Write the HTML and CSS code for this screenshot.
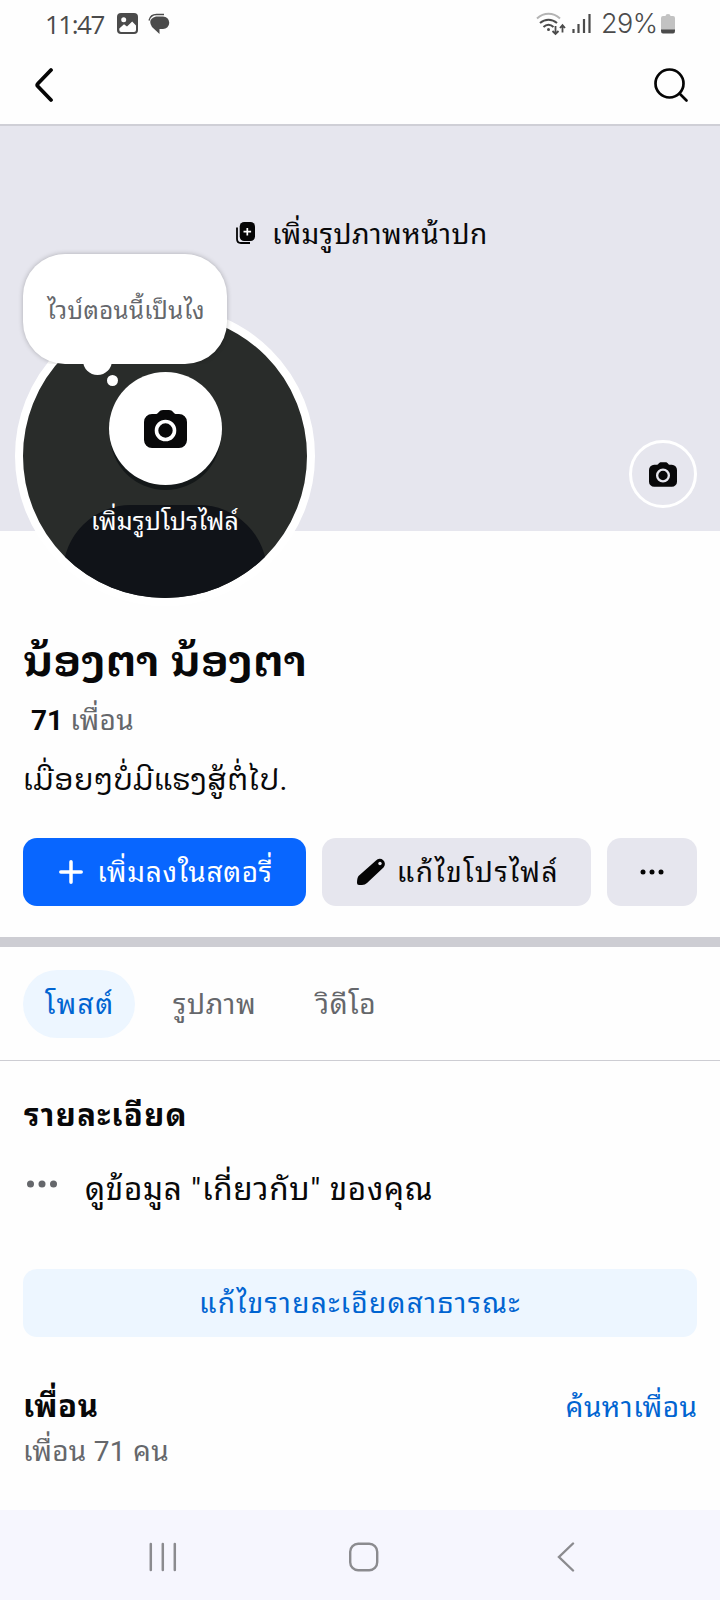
FILE: index.html
```html
<!DOCTYPE html>
<html lang="th">
<head>
<meta charset="utf-8">
<title>ນ້ອງຕາ ນ້ອງຕາ</title>
<link rel="stylesheet" href="styles.css">
</head>
<body>
<svg width="0" height="0" class="defs">
  <symbol id="camera" viewBox="0 0 43 38">
    <path fill="currentColor" d="M8 4h4.500C15 3 15 0 19 0h6c4 0 4 3 6.500 4H35a8 8 0 0 1 8 8v18a8 8 0 0 1-8 8H8a8 8 0 0 1-8-8V12a8 8 0 0 1 8-8z"/>
    <circle cx="21.500" cy="20.500" r="9" fill="none" stroke="var(--ring)" stroke-width="3.600"/>
  </symbol>
</svg>
<div class="screen">
  <div class="status">
    <span class="time">11:47</span>
    <svg class="st-img" width="21" height="21" viewBox="0 0 21 21"><rect width="21" height="21" rx="4" fill="#4b4b4b"/><circle cx="6.700" cy="6.700" r="2.500" fill="#fff"/><path d="M2.300 15.500L7 11.200l3 2.300 5.200-5 3.800 4V17q0 2-2 2H4.300q-2 0-2-2z" fill="#fff"/></svg>
    <svg class="st-chat" width="22" height="21" viewBox="0 0 22 21"><path d="M8 3.500h7a6 6 0 0 1 0 12.500h-3.500V21L4 14Q-1 6 8 3.500z" fill="#4b4b4b"/><path d="M1 7.500Q2.500 1.500 8.500 1.500h7.500" fill="none" stroke="#4b4b4b" stroke-width="1.300"/></svg>
    <svg class="st-wifi" width="30" height="24" viewBox="0 0 30 24" fill="none"><path d="M1 6.500C8 .3 17 .3 24 6.500" stroke="#b4b4b4" stroke-width="2"/><path d="M4 11c5-4.500 12-4.500 17 0M7.500 15c3-3 7-3 10 0" stroke="#4b4b4b" stroke-width="2"/><circle cx="12.500" cy="17.500" r="1.500" fill="#4b4b4b"/><path d="M19.500 14V22M16.500 19l3 3 3-3M26.500 20.500V13.500M24 16l2.500-2.800 2.500 2.800" stroke="#4b4b4b" stroke-width="1.800"/></svg>
    <svg class="st-sig" width="19" height="20" viewBox="0 0 19 20" stroke="#4b4b4b" stroke-width="2.200"><path d="M1.500 15v4M6.500 10v9M12 5v14M17.500 0v19"/></svg>
    <span class="pct">29%</span>
    <svg class="st-bat" width="14" height="20" viewBox="0 0 14 20"><path d="M2 2h2.500q0-2 2.500-2t2.500 2H12q2 0 2 2v12H0V4q0-2 2-2z" fill="#c2c2c2"/><path d="M0 15.500h14V17q0 2.500-2 2.500H2Q0 19.500 0 17z" fill="#4b4b4b"/></svg>
  </div>
  <header class="topbar">
    <svg width="20" height="36" viewBox="0 0 20 36"><path d="M17 3L4 16.500q-1.500 1.500 0 3L17 33" fill="none" stroke="#050505" stroke-width="3.800" stroke-linecap="round" stroke-linejoin="round"/></svg>
    <svg width="36" height="36" viewBox="0 0 36 36" fill="none" stroke="#050505" stroke-width="2.700"><circle cx="16.500" cy="16.500" r="14"/><path d="M26.500 26.500l7 7" stroke-linecap="round"/></svg>
  </header>
  <section class="cover">
    <div class="add-cover">
      <svg width="19" height="22" viewBox="0 0 19 22"><rect x="3.700" y="0" width="15.300" height="19" rx="4.500" fill="#050505"/><path d="M11.300 6v7.500M7.500 9.700h7.600" stroke="#fff" stroke-width="1.700"/><path d="M1 5.500V17q0 4 4 4h9" fill="none" stroke="#050505" stroke-width="1.800"/></svg>
      <span class="t-cover">เพิ่มรูปภาพหน้าปก</span>
    </div>
    <div class="cover-cam"><svg width="28" height="25"><use href="#camera"/></svg></div>
    <div class="avatar">
      <div class="cam-big"><svg width="43" height="38"><use href="#camera"/></svg></div>
      <span class="t-avatar">เพิ่มรูปโปรไฟล์</span>
    </div>
    <div class="bubble"><span class="t-bubble">ไวบ์ตอนนี้เป็นไง</span></div>
    <i class="dot dot-a"></i><i class="dot dot-b"></i>
  </section>
  <section class="profile">
    <h1 class="name">ນ້ອງຕາ ນ້ອງຕາ</h1>
    <p class="friends-count"><b>71</b><span class="t-fc">เพื่อน</span></p>
    <p class="bio">ເມື່ອຍໆບໍ່ມີແຮງສູ້ຕໍ່ໄປ.</p>
    <div class="actions">
      <div class="btn primary"><svg width="24" height="24" viewBox="0 0 24 24"><path d="M12 1.800v20.400M1.800 12h20.400" stroke="#fff" stroke-width="3.500" stroke-linecap="round"/></svg><span class="t-story">เพิ่มลงในสตอรี่</span></div>
      <div class="btn edit"><svg width="28" height="28" viewBox="0 0 28 28"><path d="M1.500 18L19 2.500a5 5 0 0 1 7.500 7L10 25q-2 2-5 2H2Q0 27 0 25q0-5 1.500-7z" fill="#050505"/><circle cx="23" cy="5.500" r="1.700" fill="#e6e6ee"/></svg><span class="t-edit">แก้ไขโปรไฟล์</span></div>
      <div class="btn more"><svg width="24" height="6" viewBox="0 0 24 6" fill="#050505"><circle cx="3" cy="3" r="2.500"/><circle cx="12" cy="3" r="2.500"/><circle cx="21" cy="3" r="2.500"/></svg></div>
    </div>
  </section>
  <nav class="tabs">
    <span class="tab active"><span class="t-tab1">โพสต์</span></span>
    <span class="tab"><span class="t-tab2">รูปภาพ</span></span>
    <span class="tab"><span class="t-tab3">วิดีโอ</span></span>
  </nav>
  <section class="details">
    <h2><span class="t-h1">รายละเอียด</span></h2>
    <div class="about"><svg width="32" height="8" viewBox="0 0 32 8" fill="#65676b"><circle cx="4.500" cy="4" r="3.500"/><circle cx="16" cy="4" r="3.500"/><circle cx="27.500" cy="4" r="3.500"/></svg><span class="t-about">ดูข้อมูล "เกี่ยวกับ" ของคุณ</span></div>
    <div class="public"><span class="t-public">แก้ไขรายละเอียดสาธารณะ</span></div>
    <div class="friends-head"><h2><span class="t-h2">เพื่อน</span></h2><span class="t-find">ค้นหาเพื่อน</span></div>
    <p class="sub"><span class="t-sub">เพื่อน 71 คน</span></p>
  </section>
  <footer class="sysnav">
    <svg width="28" height="30" viewBox="0 0 28 30"><path d="M1.800 2v26M13.800 2v26M25.800 2v26" stroke="#8b8b8f" stroke-width="2.500" stroke-linecap="round"/></svg>
    <svg class="home" width="30" height="30" viewBox="0 0 30 30"><rect x="1.200" y="1.700" width="27" height="26.600" rx="8" fill="none" stroke="#8b8b8f" stroke-width="2.400"/></svg>
    <svg width="18" height="30" viewBox="0 0 18 30"><path d="M16 1.500L2 15l14 13.500" fill="none" stroke="#8b8b8f" stroke-width="2.400" stroke-linecap="round"/></svg>
  </footer>
</div>
</body>
</html>
```
FILE: styles.css
```css
* { box-sizing: border-box; margin: 0; padding: 0; }
body { background: #fff; color: #080809; font-family: Roboto, "Noto Sans Thai Looped", "Noto Looped Thai", "Noto Sans Lao Looped", "Noto Looped Lao", "Noto Sans", sans-serif; font-size: 28px; }
svg { display: block; flex: none; }
.defs { position: absolute; }
.screen { width: 720px; height: 1600px; display: flex; flex-direction: column; overflow: hidden; background: #fefefe; }
.screen span, h1, p { white-space: nowrap; }
.status { height: 46px; display: flex; align-items: center; padding: 1px 45px 0 45px; color: #4b4b4b; font-size: 27px; }
.time { font-family: "Open Sans", sans-serif; font-size: 26px; width: 72px; letter-spacing: -1.5px; }
.st-chat { margin-left: 10px; }
.st-wifi { margin-left: auto; }
.st-sig { margin-left: 6px; }
.pct { margin-left: 10px; width: 57px; font-family: Inter, sans-serif; font-size: 27px; font-weight: 300; letter-spacing: -0.5px; }
.st-bat { margin-left: 3px; }
.topbar { height: 80px; display: flex; align-items: center; justify-content: space-between; padding: 0 31px 1px 34px; border-bottom: 2px solid #cfcfd6; }
.cover { height: 405px; background: #e6e6ee; position: relative; line-height: 40px; }
.add-cover { display: flex; align-items: center; gap: 17px; height: 60px; position: absolute; left: 236px; top: 77px; }
.t-cover { letter-spacing: 0.5px; padding-top: 3px; }
.cover-cam { position: absolute; right: 23px; top: 314px; width: 68px; height: 68px; border: 3px solid #fff; border-radius: 50%; display: grid; place-items: center; --ring: #e6e6ee; }
.avatar { position: absolute; left: 15px; top: 180px; width: 300px; height: 300px; border-radius: 50%; border: 8px solid #fff; background: #292c2a; overflow: hidden; display: flex; flex-direction: column; align-items: center; padding-top: 58px; }
.avatar::before { content: ""; position: absolute; left: 40px; top: 191px; width: 204px; height: 160px; border-radius: 68px 68px 0 0; background: #101318; }
.cam-big { width: 113px; height: 113px; border-radius: 50%; background: #fff; display: grid; place-items: center; --ring: #fff; box-shadow: 0 6px 0 -1px #141819; position: relative; }
.t-avatar { position: relative; color: #fff; margin-top: 17px; font-size: 25px; letter-spacing: 0.15px; }
.bubble { position: absolute; left: 23px; top: 128px; width: 204px; height: 110px; padding: 4px 0 0 2px; border-radius: 42px; background: #fff; box-shadow: 0 0 5px rgba(0,0,0,.25); clip-path: inset(-6px -6px 0 -6px); display: grid; place-items: center; color: #65676b; font-size: 24px; letter-spacing: 0.4px; }
.dot { position: absolute; background: #fff; border-radius: 50%; }
.dot-a { left: 83px; top: 220px; width: 29px; height: 29px; }
.dot-b { left: 107px; top: 249px; width: 11px; height: 11px; }
.profile { height: 416px; padding: 95px 23px 0; border-bottom: 10px solid #cdcdd3; }
.name { font-size: 42px; line-height: 72px; height: 70px; font-weight: 700; letter-spacing: 0.2px; }
.friends-count { display: flex; gap: 7px; padding-left: 8px; height: 50px; line-height: 50px; color: #65676b; }
.t-fc { letter-spacing: 0.4px; }
.friends-count b { color: #080809; font-size: 28px; }
.bio { font-size: 30px; height: 92px; line-height: 67px; }
.actions { display: grid; grid-template-columns: 283px 269px 90px; gap: 16px; height: 68px; line-height: 40px; }
.btn { border-radius: 14px; background: #e6e6ee; display: flex; align-items: center; justify-content: center; gap: 15px; }
.btn span { padding-top: 2px; }
.primary { background: #0866ff; color: #fff; letter-spacing: 0.7px; gap: 14px; padding-left: 3px; }
.edit { letter-spacing: 1.6px; gap: 12px; padding-left: 3px; }
.tabs { height: 114px; display: flex; align-items: center; padding: 0 23px; border-bottom: 1px solid #cdcdd3; color: #65676b; line-height: 40px; }
.tab { height: 68px; padding: 2px 22px 0; border-radius: 34px; display: flex; align-items: center; margin-right: 15px; letter-spacing: 0.7px; }
.active { width: 112px; margin-right: 16px; background: #edf6ff; color: #0064d1; letter-spacing: 1.5px; }
.details { height: 449px; padding: 0 23px; }
h2 { font-size: 31px; line-height: 50px; letter-spacing: 0.6px; }
.details > h2 { padding: 30px 0 0 1px; height: 78px; letter-spacing: 1.3px; }
.about { display: flex; gap: 27px; height: 120px; line-height: 101px; padding-left: 3px; font-size: 31.500px; letter-spacing: 0.7px; }
.about svg { margin-top: 41px; }
.public { height: 68px; margin-top: 10px; border-radius: 14px; background: #edf6ff; color: #0064d1; display: flex; align-items: center; justify-content: center; line-height: 40px; padding-top: 2px; letter-spacing: 1.350px; }
.friends-head { display: flex; justify-content: space-between; align-items: center; margin-top: 45px; height: 50px; line-height: 50px; color: #0064d1; }
.t-find { letter-spacing: 0.5px; margin-right: -0.5px; padding-top: 2px; }
.friends-head h2 { color: #080809; }
.sub { color: #65676b; line-height: 40px; letter-spacing: 0.3px; }
.sysnav { height: 90px; background: #f6f6fe; display: flex; align-items: center; padding: 3px 145px 0 149px; justify-content: space-between; }
.home { margin-left: -7px; }
```
